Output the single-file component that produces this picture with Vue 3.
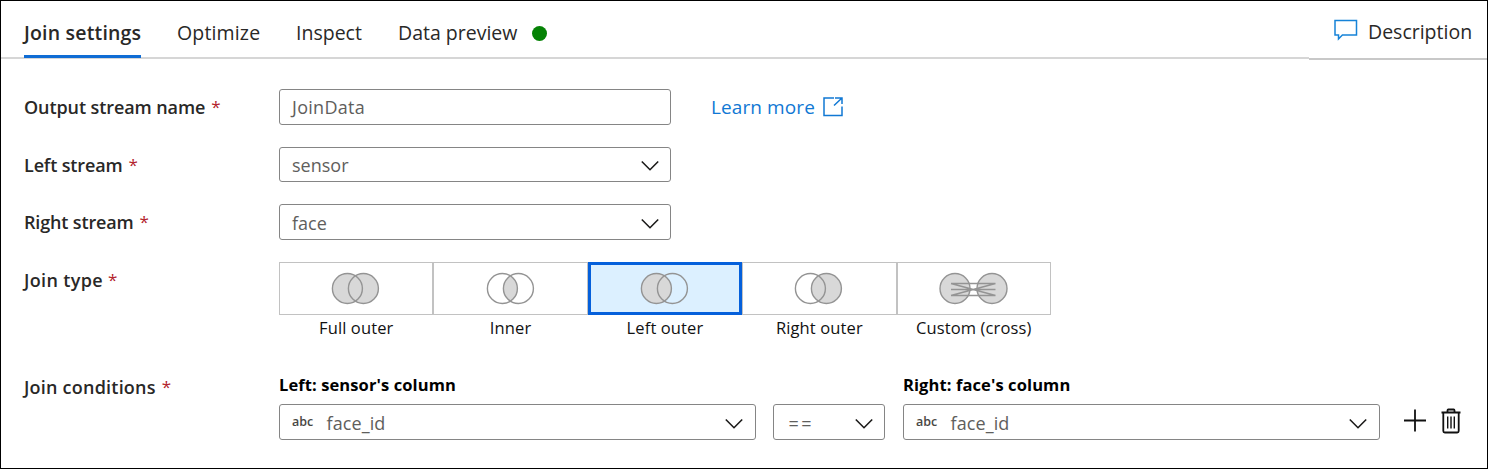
<script setup>
const tabs = [
  { name: 'Join settings', cls: 'active' },
  { name: 'Optimize', cls: 'optimize' },
  { name: 'Inspect', cls: 'inspect' },
  { name: 'Data preview', cls: 'preview' }
]
const fields = [
  { label: 'Output stream name', value: 'JoinData', select: false },
  { label: 'Left stream', value: 'sensor', select: true },
  { label: 'Right stream', value: 'face', select: true }
]
const joins = [
  { name: 'Full outer', kind: 'full' },
  { name: 'Inner', kind: 'inner' },
  { name: 'Left outer', kind: 'left' },
  { name: 'Right outer', kind: 'right' },
  { name: 'Custom (cross)', kind: 'cross' }
]
const conditions = [
  { title: "Left: sensor's column", kind: 'column' },
  { title: '', kind: 'operator' },
  { title: "Right: face's column", kind: 'column' }
]
</script>

<template>
  <main class="panel">
    <header class="header">
      <nav class="tabs">
        <div v-for="t in tabs" :key="t.name" class="tab" :class="t.cls"><span>{{ t.name }}</span></div>
        <i class="dot"></i>
      </nav>
      <div class="description">
        <svg width="24" height="22" viewBox="0 0 24 22"><path d="M1 1.5H22.5V16H8.4L4.5 20V16H1Z" /></svg>
        <span>Description</span>
      </div>
    </header>

    <section class="form">
      <div v-for="f in fields" :key="f.label" class="row" :class="{ select: f.select }">
        <label class="label"><span>{{ f.label }}</span><b>*</b></label>
        <div class="box wide">
          <span class="value">{{ f.value }}</span>
          <svg v-if="f.select" class="chevron" width="20" height="12" viewBox="0 0 20 12"><path d="M1.8 1.5L10 9.7L18.2 1.5" /></svg>
        </div>
        <a v-if="!f.select" class="learn">
          <span>Learn more</span>
          <svg width="20" height="20" viewBox="0 0 20 20"><path d="M11 1H1V18.6H19V9.5M12 1H19V7M11 8.5L18.7 1.2" /></svg>
        </a>
      </div>

      <div class="row joinrow">
        <label class="label"><span>Join type</span><b>*</b></label>
        <div class="joins">
          <div v-for="j in joins" :key="j.name" class="join" :class="j.kind">
            <div class="tile">
              <svg v-if="j.kind !== 'cross'" class="venn" width="48" height="32" viewBox="0 0 48 32">
                <circle v-if="j.kind === 'full' || j.kind === 'left'" class="fill" cx="15.4" cy="15.5" r="15" />
                <circle v-if="j.kind === 'full' || j.kind === 'right'" class="fill" cx="31.4" cy="15.5" r="15" />
                <path v-if="j.kind === 'inner'" class="fill" d="M23.4 2.8A15 15 0 0 1 23.4 28.2A15 15 0 0 1 23.4 2.8Z" />
                <circle cx="15.4" cy="15.5" r="15" />
                <circle cx="31.4" cy="15.5" r="15" />
              </svg>
              <svg v-else class="venn" width="70" height="32" viewBox="0 0 70 32">
                <circle class="fill" cx="16" cy="15.5" r="15" />
                <circle class="fill" cx="53" cy="15.5" r="15" />
                <circle cx="16" cy="15.5" r="15" />
                <circle cx="53" cy="15.5" r="15" />
                <path d="M12 10.5H56.5M12 16.5H56.5M12 22.5H56.5M12 10.5L56.5 22.5M12 22.5L56.5 10.5" />
              </svg>
            </div>
            <span class="caption">{{ j.name }}</span>
          </div>
        </div>
      </div>

      <div class="row condrow">
        <label class="label"><span>Join conditions</span><b>*</b></label>
        <div class="conditions">
          <div v-for="(c, i) in conditions" :key="i" class="condition" :class="c.kind">
            <div class="title">{{ c.title }}</div>
            <div class="box">
              <span v-if="c.kind === 'column'" class="type">abc</span>
              <span class="value">{{ c.kind === 'column' ? 'face_id' : '==' }}</span>
              <svg class="chevron" width="20" height="12" viewBox="0 0 20 12"><path d="M1.8 1.5L10 9.7L18.2 1.5" /></svg>
            </div>
          </div>
          <div class="actions">
            <svg width="24" height="24" viewBox="0 0 24 24"><path d="M1 11.5H23M12 .5V22.5" /></svg>
            <svg width="20" height="26" viewBox="0 0 20 26"><path d="M.5 4.5H19.5M6.5 4V2.5Q6.5 1.5 7.3 1.5H12.7Q13.5 1.5 13.5 2.5V4M2.3 4.5V23Q2.3 24.5 3.8 24.5H16.2Q17.7 24.5 17.7 23V4.5" /><path class="slats" d="M6.7 8.5V20.5M10 8.5V20.5M13.3 8.5V20.5" /></svg>
          </div>
        </div>
      </div>
    </section>
  </main>
</template>

<style>
body { background: #fff; }
</style>

<style scoped>
* { box-sizing: border-box; }
.panel {
  width: 1488px; height: 469px; border: 1px solid #000; background: #fff; overflow: hidden;
  font-family: "Open Sans", "Noto Sans", sans-serif; color: #292827; white-space: nowrap;
}
svg { fill: none; display: block; flex: none; }
.header { display: flex; justify-content: space-between; height: 58px; }
.tabs { display: flex; flex: 1; padding-left: 23px; border-bottom: 2px solid #d6d6d6; }
.tab { height: 57px; margin-right: 36px; padding-top: 18px; font-size: 19.5px; line-height: 28px; }
.tab.active { border-bottom: 3px solid #0f6cd4; font-weight: 600; width: 117px; letter-spacing: .18px; }
.tab.optimize { width: 83px; letter-spacing: .15px; }
.tab.inspect { width: 66px; }
.tab.preview { width: 120px; margin-right: 14px; }
.dot { width: 15px; height: 15px; margin-top: 25px; border-radius: 50%; background: #058205; }
.description { display: flex; width: 178px; height: 59px; padding: 18px 0 0 25px; border-bottom: 2px solid #c8c8c8; font-size: 19.5px; line-height: 26px; }
.description svg { stroke: #1683d8; stroke-width: 1.5; }
.description span { margin-left: 10px; }
.form { padding: 30px 0 0 23px; }
.row { display: flex; height: 57.7px; }
.label { width: 255px; font-size: 18px; font-weight: 600; line-height: 26px; padding-top: 5px; letter-spacing: -.09px; }
.label b { display: inline-block; color: #b3232c; font-size: 17px; line-height: 20px; font-weight: 400; margin-left: 6px; transform: translateY(-1px); }
.select .label { letter-spacing: -.15px; }
.box { display: flex; align-items: center; height: 35.5px; border: 1.5px solid #858585; border-radius: 3px; padding: 0 10px 0 12px; }
.box.wide { width: 392px; }
.value { font-size: 18px; color: #605e5c; line-height: 26px; letter-spacing: .3px; }
.select .value { letter-spacing: 0; padding-top: 2px; }
.select .chevron { margin-top: 3px; }
.chevron { margin-left: auto; margin-top: 4px; stroke: #1b1a19; stroke-width: 1.6; }
.learn { display: flex; align-items: center; height: 36px; margin-left: 40px; color: #1078d4; font-size: 19px; letter-spacing: .1px; }
.learn svg { margin-left: 8px; stroke: #1078d4; stroke-width: 1.5; }
.joinrow { height: 113px; }
.joinrow .label { letter-spacing: .35px; }
.joinrow .label b { margin-left: 5px; }
.joins { display: flex; }
.join { width: 154.4px; text-align: center; }
.tile { display: flex; align-items: center; justify-content: center; height: 53px; border: 1.5px solid #c2c2c2; }
.left .tile { border: 3px solid #0560db; background: #dcf0ff; }
.venn { overflow: visible; stroke: #949494; stroke-width: 1.4; }
.fill { fill: #d8d8d8; stroke: none; }
.caption { display: block; margin-top: 1px; color: #111; font-size: 16.5px; line-height: 24px; letter-spacing: .12px; }
.condrow .label { padding-top: 0; margin-top: -1px; letter-spacing: .22px; }
.condrow .label b { margin-left: 6px; }
.conditions { display: flex; }
.condition { margin-right: 17px; }
.condition.column { width: 477.4px; }
.condition.operator { width: 112px; margin-right: 17.6px; }
.condition .value { padding-top: 2px; letter-spacing: .1px; }
.operator .box { padding-left: 14px; }
.operator .value { letter-spacing: 2.6px; }
.column .chevron { margin-right: 1px; }
.title { height: 30px; margin-top: -1px; color: #000; font-size: 16.5px; font-weight: 700; line-height: 22px; letter-spacing: .1px; }
.type { width: 34.5px; font-size: 12.5px; font-weight: 600; color: #484644; }
.actions { display: flex; align-items: center; height: 36px; margin: 28px 0 0 5.5px; stroke: #111; stroke-width: 1.8; }
.actions svg + svg { margin-left: 14.5px; }
.slats { stroke-width: 1.4; }
</style>
